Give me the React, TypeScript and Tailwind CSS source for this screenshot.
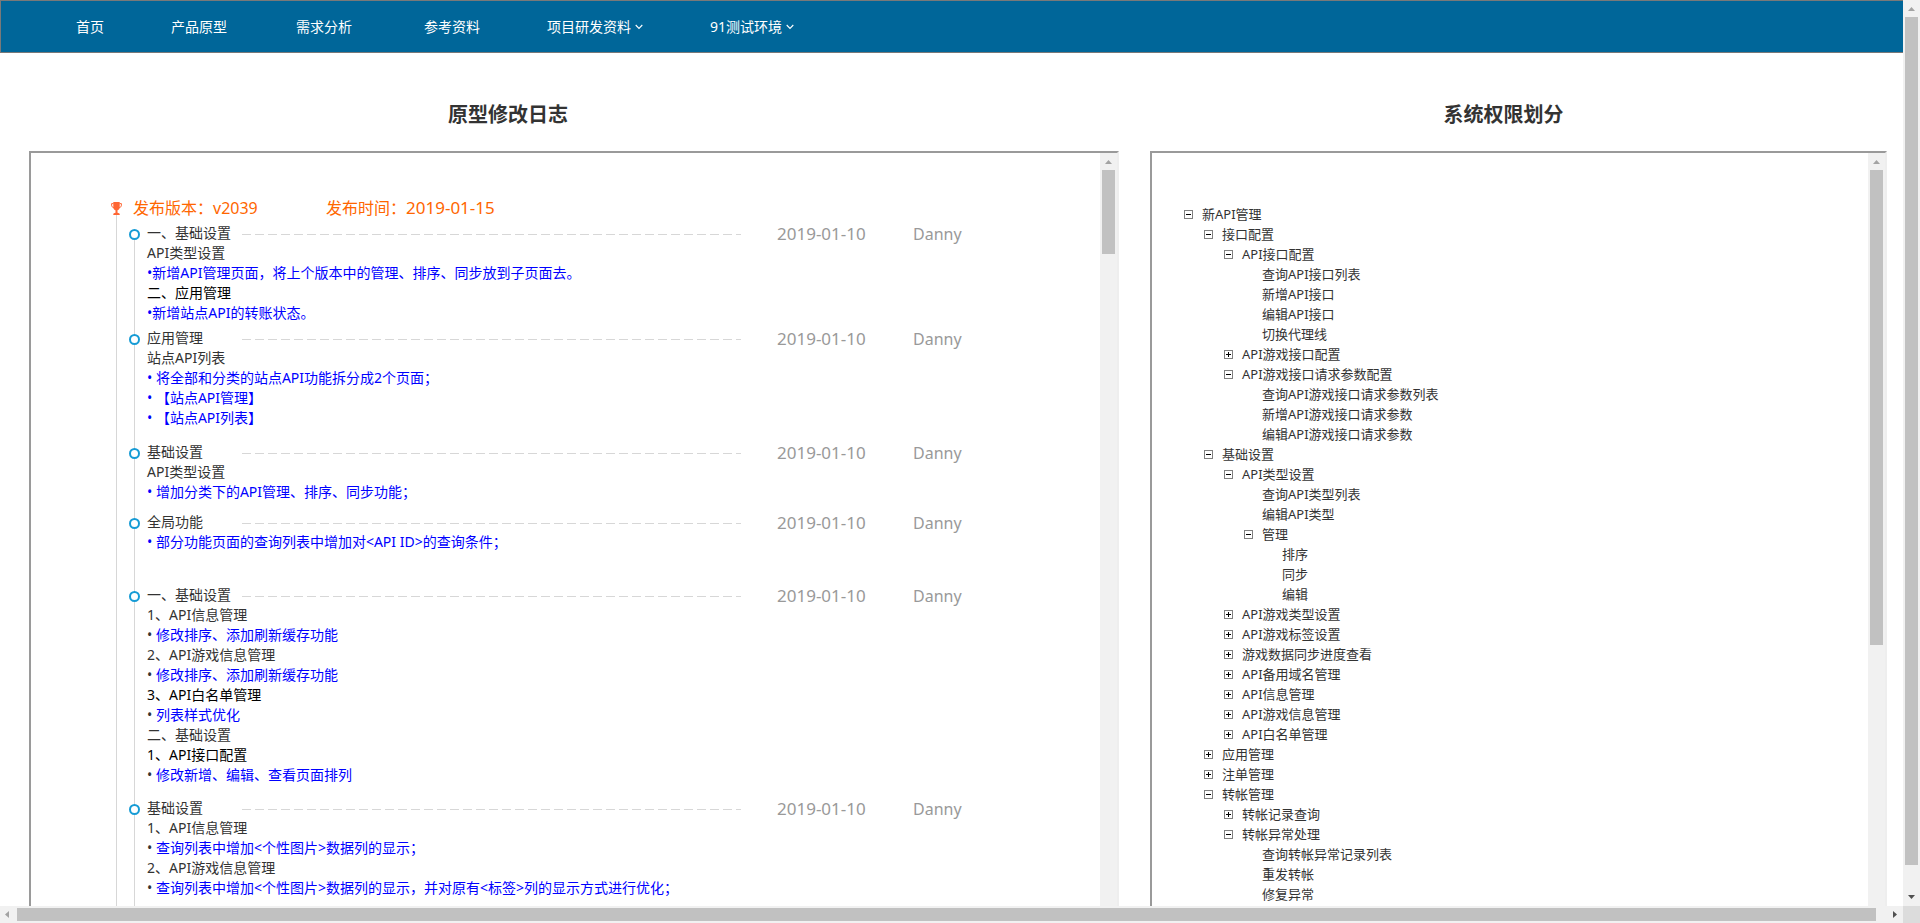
import type { JSX, ReactNode } from 'react'

type Tone = 'gray' | 'black' | 'blue' | 'dot'

interface LogLine {
  text: string
  tone: Tone
}

interface LogEntry {
  lines: LogLine[]
  gap: string
}

interface TreeRow {
  label: string
  depth: number
  state?: 'open' | 'closed'
}

const NAV_ITEMS = [
  { label: '首页', space: 'ml-[75px]' },
  { label: '产品原型', space: 'ml-[67px]' },
  { label: '需求分析', space: 'ml-[69px]' },
  { label: '参考资料', space: 'ml-[72px]' },
  { label: '项目研发资料', space: 'ml-[67px]', menu: true },
  { label: '91测试环境', space: 'ml-[67px]', menu: true },
]

const TONES: Record<Tone, string> = {
  gray: 'text-[#333333]',
  black: 'text-black',
  blue: 'text-[#0000ff]',
  dot: 'text-[#0000ff]',
}

const INDENTS = ['pl-0', 'pl-5', 'pl-10', 'pl-15', 'pl-20', 'pl-25']

const g = (text: string): LogLine => ({ text, tone: 'gray' })
const k = (text: string): LogLine => ({ text, tone: 'black' })
const b = (text: string): LogLine => ({ text, tone: 'blue' })
// blue text behind a dark bullet
const d = (text: string): LogLine => ({ text, tone: 'dot' })

const LOG: LogEntry[] = [
  {
    gap: 'pb-[5px]',
    lines: [
      g('一、基础设置'),
      g('API类型设置'),
      b('•新增API管理页面，将上个版本中的管理、排序、同步放到子页面去。'),
      k('二、应用管理'),
      b('•新增站点API的转账状态。'),
    ],
  },
  {
    gap: 'pb-[14px]',
    lines: [
      g('应用管理'),
      g('站点API列表'),
      b('• 将全部和分类的站点API功能拆分成2个页面；'),
      b('• 【站点API管理】'),
      b('• 【站点API列表】'),
    ],
  },
  {
    gap: 'pb-[10px]',
    lines: [g('基础设置'), g('API类型设置'), b('• 增加分类下的API管理、排序、同步功能；')],
  },
  {
    gap: 'pb-[33px]',
    lines: [g('全局功能'), b('• 部分功能页面的查询列表中增加对<API ID>的查询条件；')],
  },
  {
    gap: 'pb-[13px]',
    lines: [
      g('一、基础设置'),
      g('1、API信息管理'),
      d('修改排序、添加刷新缓存功能'),
      g('2、API游戏信息管理'),
      d('修改排序、添加刷新缓存功能'),
      k('3、API白名单管理'),
      d('列表样式优化'),
      g('二、基础设置'),
      k('1、API接口配置'),
      d('修改新增、编辑、查看页面排列'),
    ],
  },
  {
    gap: 'pb-[33px]',
    lines: [
      g('基础设置'),
      g('1、API信息管理'),
      d('查询列表中增加<个性图片>数据列的显示；'),
      g('2、API游戏信息管理'),
      d('查询列表中增加<个性图片>数据列的显示，并对原有<标签>列的显示方式进行优化；'),
    ],
  },
]

const TREE: TreeRow[] = [
  { label: '新API管理', depth: 0, state: 'open' },
  { label: '接口配置', depth: 1, state: 'open' },
  { label: 'API接口配置', depth: 2, state: 'open' },
  { label: '查询API接口列表', depth: 3 },
  { label: '新增API接口', depth: 3 },
  { label: '编辑API接口', depth: 3 },
  { label: '切换代理线', depth: 3 },
  { label: 'API游戏接口配置', depth: 2, state: 'closed' },
  { label: 'API游戏接口请求参数配置', depth: 2, state: 'open' },
  { label: '查询API游戏接口请求参数列表', depth: 3 },
  { label: '新增API游戏接口请求参数', depth: 3 },
  { label: '编辑API游戏接口请求参数', depth: 3 },
  { label: '基础设置', depth: 1, state: 'open' },
  { label: 'API类型设置', depth: 2, state: 'open' },
  { label: '查询API类型列表', depth: 3 },
  { label: '编辑API类型', depth: 3 },
  { label: '管理', depth: 3, state: 'open' },
  { label: '排序', depth: 4 },
  { label: '同步', depth: 4 },
  { label: '编辑', depth: 4 },
  { label: 'API游戏类型设置', depth: 2, state: 'closed' },
  { label: 'API游戏标签设置', depth: 2, state: 'closed' },
  { label: '游戏数据同步进度查看', depth: 2, state: 'closed' },
  { label: 'API备用域名管理', depth: 2, state: 'closed' },
  { label: 'API信息管理', depth: 2, state: 'closed' },
  { label: 'API游戏信息管理', depth: 2, state: 'closed' },
  { label: 'API白名单管理', depth: 2, state: 'closed' },
  { label: '应用管理', depth: 1, state: 'closed' },
  { label: '注单管理', depth: 1, state: 'closed' },
  { label: '转帐管理', depth: 1, state: 'open' },
  { label: '转帐记录查询', depth: 2, state: 'closed' },
  { label: '转帐异常处理', depth: 2, state: 'open' },
  { label: '查询转帐异常记录列表', depth: 3 },
  { label: '重发转帐', depth: 3 },
  { label: '修复异常', depth: 3 },
]

function Chevron(): JSX.Element {
  return (
    <svg width="8" height="6" viewBox="0 0 8 6" fill="none" stroke="white" aria-hidden="true">
      <path d="M0.7 1 4 4.4 7.3 1" strokeWidth="1.1" />
    </svg>
  )
}

function Trophy(): JSX.Element {
  return (
    <svg width="11" height="13" viewBox="0 0 11 13" fill="#ff6633" aria-hidden="true">
      <path d="M2.300 0h6.400v6c-.4 1.300-1.200 2-2.200 2.300v2.400c1.200.1 2 .6 2.200 1.300v1H2.300v-1c.2-.7 1-1.200 2.200-1.300V8.300C3.500 8 2.700 7.300 2.300 6z" />
      <path d="M2.500 1.600H.6v1.600c0 1.300.8 2.200 2.300 2.500M8.500 1.600h1.900v1.600c0 1.300-.8 2.200-2.300 2.500" fill="none" stroke="#ff6633" />
    </svg>
  )
}

function Arrow({ direction, dark = false }: { direction: 'up' | 'down' | 'left' | 'right'; dark?: boolean }): JSX.Element {
  const shapes = {
    up: 'M5 11h7L8.500 7z',
    down: 'M5 6h7L8.500 10z',
    left: 'M9 5v7L5 8.500z',
    right: 'M7 5v7L11 8.500z',
  }
  return (
    <svg width="17" height="17" className={dark ? 'shrink-0 fill-[#505050]' : 'shrink-0 fill-[#a3a3a3]'} aria-hidden="true">
      <path d={shapes[direction]} />
    </svg>
  )
}

function Frame({ thumb, children }: { thumb: string; children: ReactNode }): JSX.Element {
  return (
    <div className="flex min-h-0 flex-1 border-t-2 border-r-2 border-l-2 border-t-[#9a9a9a] border-r-[#eeeeee] border-l-[#9a9a9a]">
      <div className="min-w-0 flex-1 overflow-hidden">{children}</div>
      <div className="flex w-[17px] shrink-0 flex-col items-center bg-[#f1f1f1]">
        <Arrow direction="up" />
        <div className={`w-[13px] bg-[#c1c1c1] ${thumb}`} />
      </div>
    </div>
  )
}

function Entry({ entry }: { entry: LogEntry }): JSX.Element {
  const [title, ...rest] = entry.lines
  return (
    <li className={`flex ${entry.gap}`}>
      <span className="mt-[6px] size-[11px] shrink-0 rounded-full border-2 border-[#169bd5] bg-white" />
      <div className="ml-[7px] min-w-0 flex-1 text-sm leading-5">
        <div className="flex h-5 items-center whitespace-nowrap">
          <h3 className={`w-[95px] ${TONES[title.tone]}`}>{title.text}</h3>
          <div className="flex items-center pt-[2px]">
            <span className="h-px w-[499px] bg-[repeating-linear-gradient(90deg,#d7d7d7_0_9px,transparent_9px_13px)]" />
            <time className="ml-9 w-[136px] text-[17px] text-[#999999]">2019-01-10</time>
            <span className="text-base text-[#999999]">Danny</span>
          </div>
        </div>
        {rest.map((line, i) => (
          <p key={i} className={`whitespace-nowrap ${TONES[line.tone]}`}>
            {line.tone === 'dot' && <span className="text-[#333333]">• </span>}
            {line.text}
          </p>
        ))}
      </div>
    </li>
  )
}

function Toggle({ row }: { row: TreeRow }): JSX.Element {
  return (
    <button type="button" aria-label={row.label} className="mr-[9px] size-[9px] shrink-0">
      <svg width="9" height="9" shapeRendering="crispEdges" fill="none" aria-hidden="true">
        <path d="M0.500 0.500h8v8h-8z" stroke="#808080" />
        <path d={row.state === 'open' ? 'M2 4.500h5' : 'M2 4.500h5M4.500 2v5'} stroke="black" />
      </svg>
    </button>
  )
}

export default function App(): JSX.Element {
  return (
    <div className="flex h-screen flex-col overflow-hidden bg-white font-['Noto_Sans','Noto_Sans_CJK_SC',sans-serif] text-[#333333]">
      <div className="flex min-h-0 flex-1">
        <div className="flex min-w-0 flex-1 flex-col">
          <nav className="flex h-[53px] shrink-0 items-center border border-r-0 border-[#797979] bg-[#006699] text-sm text-white">
            {NAV_ITEMS.map((item) => (
              <a key={item.label} href="#" className={`flex items-center gap-1 whitespace-nowrap ${item.space}`}>
                {item.label}
                {item.menu && <Chevron />}
              </a>
            ))}
          </nav>

          <main className="flex min-h-0 flex-1 gap-[31px] pr-4 pl-[29px]">
            <section className="flex min-w-0 flex-[1090] flex-col">
              <h2 className="pt-[47px] pr-[132px] pb-[21px] text-center text-xl leading-[30px] font-bold">原型修改日志</h2>
              <Frame thumb="h-[84px]">
                <div className="pt-[42px] pl-20">
                  <div className="flex h-[26px] items-center text-base whitespace-nowrap text-[#ff6600]">
                    <Trophy />
                    <p className="ml-[11px] w-[193px]">发布版本：v2039</p>
                    <p>
                      发布时间：<time className="text-[17px]">2019-01-15</time>
                    </p>
                  </div>
                  <div className="-mt-2 ml-[5px] border-l border-[#d7d7d7] pt-[10px] pl-[12px]">
                    <ol className="bg-[linear-gradient(#d7d7d7,#d7d7d7)] bg-[length:1px_100%] bg-[position:5px_10px] bg-no-repeat">
                      {LOG.map((entry, i) => (
                        <Entry key={i} entry={entry} />
                      ))}
                    </ol>
                  </div>
                </div>
              </Frame>
            </section>

            <section className="flex min-w-0 flex-[737] flex-col">
              <h2 className="pt-[47px] pr-[30px] pb-[21px] text-center text-xl leading-[30px] font-bold">系统权限划分</h2>
              <Frame thumb="h-[475px]">
                <ul className="pt-[51px] pl-8 text-[13px] leading-5">
                  {TREE.map((row, i) => (
                    <li key={i} className={`flex h-5 items-center whitespace-nowrap ${INDENTS[row.depth]}`}>
                      {row.state ? <Toggle row={row} /> : <span className="w-[18px]" />}
                      {row.label}
                    </li>
                  ))}
                </ul>
              </Frame>
            </section>
          </main>
        </div>

        <div className="flex w-[17px] shrink-0 flex-col items-center bg-[#f1f1f1]">
          <Arrow direction="up" />
          <div className="w-[13px] flex-1 bg-[#c1c1c1]" />
          <div className="h-6" />
          <Arrow direction="down" dark />
        </div>
      </div>

      <div className="flex h-[17px] shrink-0 items-center bg-[#f1f1f1]">
        <Arrow direction="left" />
        <div className="h-[13px] flex-1 bg-[#c1c1c1]" />
        <div className="w-[10px]" />
        <Arrow direction="right" dark />
        <div className="h-full w-[17px] bg-[#dcdcdc]" />
      </div>
    </div>
  )
}
